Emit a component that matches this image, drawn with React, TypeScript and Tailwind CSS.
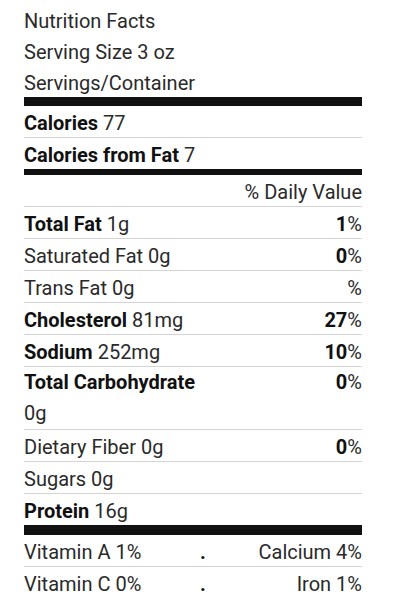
import React from "react";

const Row = ({
  left,
  right,
  border = true,
  wrap = false,
}: {
  left: React.ReactNode;
  right?: React.ReactNode;
  border?: boolean;
  wrap?: boolean;
}) => (
  <div
    className={`flex justify-between items-start ${
      wrap ? "leading-[31px]" : "pt-[3px] leading-[28px]"
    } ${border ? "border-b border-[#d4d4d4]" : ""}`}
  >
    <div className="w-[185px]">{left}</div>
    {right !== undefined && <div className="text-right">{right}</div>}
  </div>
);

const Pct = ({ n }: { n: string }) => (
  <span>
    <b className="font-bold text-[#111]">{n}</b>%
  </span>
);

const B = ({ children }: { children: React.ReactNode }) => (
  <b className="font-bold text-[#111]">{children}</b>
);

export default function App() {
  return (
    <div
      className="bg-white w-[400px] h-[600px] overflow-hidden pl-[24px] pt-[4px] text-[20px] text-[#2a2a2a]"
      style={{ fontFamily: "Roboto, 'Noto Sans', sans-serif" }}
    >
      <div className="w-[338px]">
        <div className="pt-[3px] leading-[28px] whitespace-nowrap">Nutrition Facts</div>
        <div className="pt-[3px] leading-[28px] whitespace-nowrap">Serving Size 3 oz</div>
        <div className="pt-[3px] leading-[28px] whitespace-nowrap">Servings/Container</div>
        <div className="h-[9px] bg-[#111]" />
        <Row left={<><B>Calories</B> 77</>} />
        <div className="pt-[3px] leading-[28px]">
          <B>Calories from Fat</B> 7
        </div>
        <div className="h-[6px] bg-[#111]" />
        <div className="pt-[3px] leading-[28px] text-right border-b border-[#d4d4d4]">% Daily Value</div>
        <Row left={<><B>Total Fat</B> 1g</>} right={<Pct n="1" />} />
        <Row left="Saturated Fat 0g" right={<Pct n="0" />} />
        <Row left="Trans Fat 0g" right="%" />
        <Row left={<><B>Cholesterol</B> 81mg</>} right={<Pct n="27" />} />
        <Row left={<><B>Sodium</B> 252mg</>} right={<Pct n="10" />} />
        <Row left={<><B>Total Carbohydrate</B> 0g</>} right={<Pct n="0" />} wrap />
        <Row left="Dietary Fiber 0g" right={<Pct n="0" />} />
        <Row left="Sugars 0g" />
        <div className="pt-[3px] leading-[28px]">
          <B>Protein</B> 16g
        </div>
        <div className="h-[10px] bg-[#111]" />
        <div className="grid grid-cols-[176px_auto_1fr] pt-[3px] leading-[28px] border-b border-[#d4d4d4]">
          <div>Vitamin A 1%</div>
          <div className="font-bold text-[#111]">.</div>
          <div className="text-right">Calcium 4%</div>
        </div>
        <div className="grid grid-cols-[176px_auto_1fr] pt-[3px] leading-[28px]">
          <div>Vitamin C 0%</div>
          <div className="font-bold text-[#111]">.</div>
          <div className="text-right">Iron 1%</div>
        </div>
      </div>
    </div>
  );
}
